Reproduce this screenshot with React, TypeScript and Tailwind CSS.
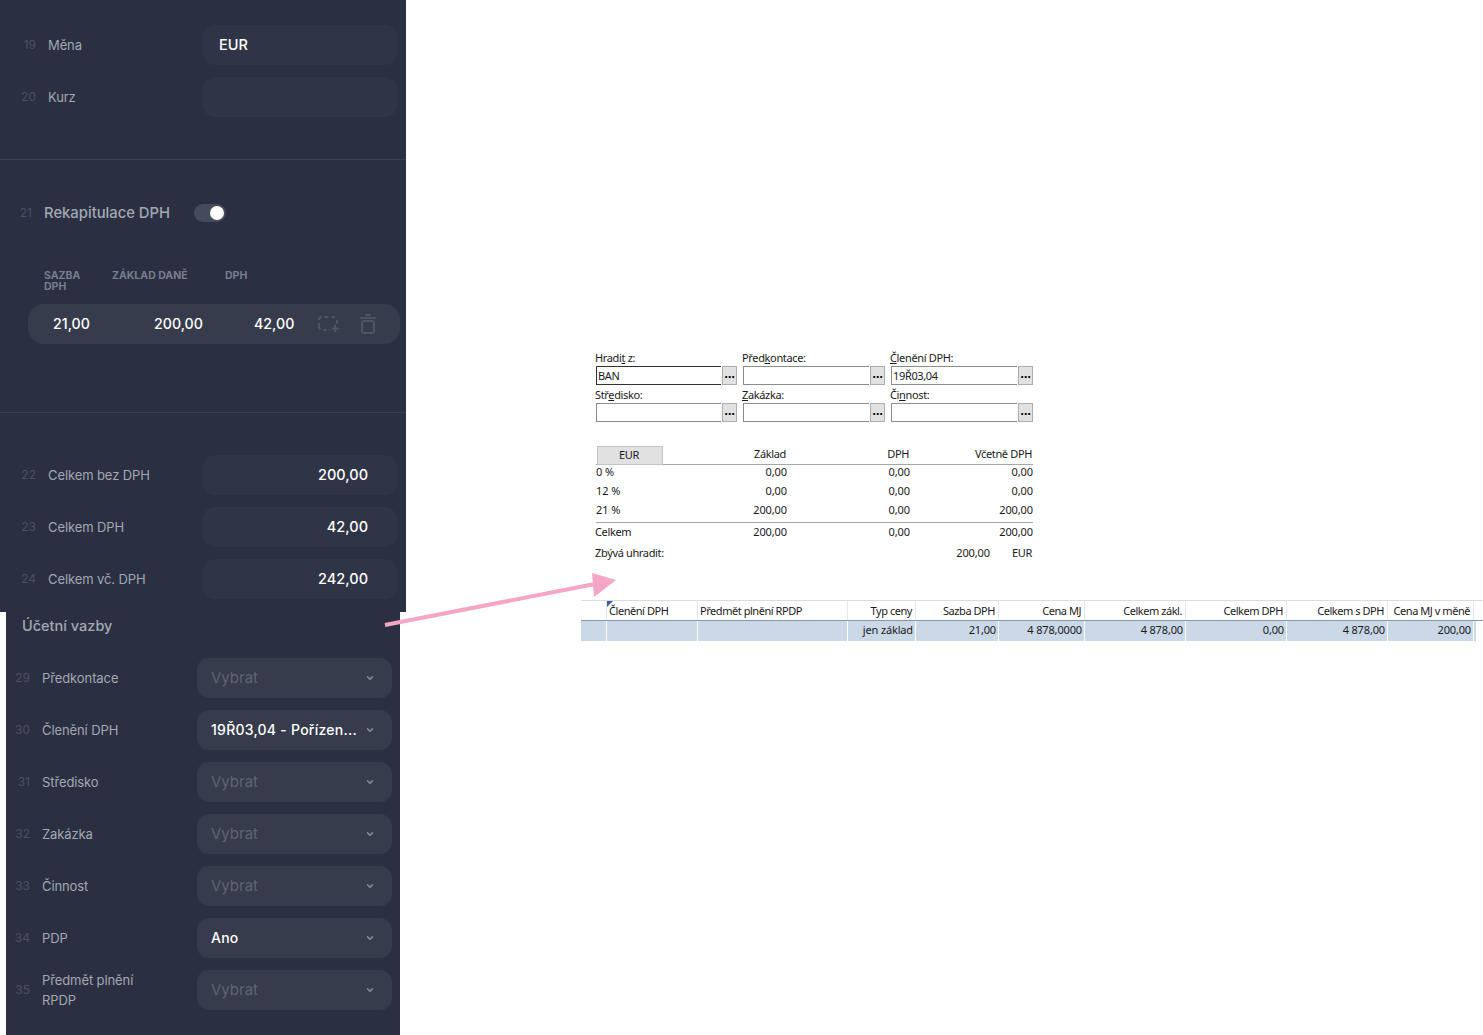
import { ChevronDown } from "lucide-react";
import type { ReactNode } from "react";

function NumLabel({ n, label, w, numW }: { n: number; label: ReactNode; w: string; numW: string }) {
  return (
    <div className={`flex items-center ${w}`}>
      <span className={`${numW} shrink-0 text-right text-[12px] text-[#4a5060]`}>{n}</span>
      <span className="ml-[12px] text-[13px] leading-[20px] tracking-[-0.1px] text-[#a3a8b3]">{label}</span>
    </div>
  );
}

function ValueRow({ n, label, value, right }: { n: number; label: string; value?: string; right?: boolean }) {
  return (
    <div className="flex h-10 items-center">
      <NumLabel n={n} label={label} w="w-[203px]" numW="w-[36px]" />
      <div className={`flex h-10 w-[194px] items-center rounded-xl bg-[#2f3546] text-[14.5px] font-medium text-white ${right ? "justify-end pr-[29px]" : "pl-4"}`}>
        {value}
      </div>
    </div>
  );
}

function SelectRow({ n, label, value }: { n: number; label: ReactNode; value?: string }) {
  return (
    <div className="flex h-10 items-center">
      <NumLabel n={n} label={label} w="w-[191px]" numW="w-[24px]" />
      <div className="flex h-10 w-[195px] items-center justify-between rounded-xl bg-[#363c4b] pl-[14px] pr-[17px]">
        <span className={`whitespace-nowrap ${value ? "pb-px text-[14px] font-medium tracking-[0.25px] text-white" : "text-[15px] text-[#5e6472]"}`}>{value ?? "Vybrat"}</span>
        <ChevronDown size={10} strokeWidth={3.5} className="shrink-0 text-[#8b909c]" />
      </div>
    </div>
  );
}

function DarkPanels() {
  return (
    <div className="w-[406px] shrink-0 font-['Inter',sans-serif]">
      <div className="h-[612px] bg-[#2a3041]">
        <div className="flex flex-col gap-3 pt-[25px] pr-[9px]">
          <ValueRow n={19} label="Měna" value="EUR" />
          <ValueRow n={20} label="Kurz" />
        </div>
        <div className="mt-[42px] h-px bg-[#3a4052]" />
        <div className="mt-[44px] flex h-[18px] items-center">
          <span className="w-[32px] text-right text-[12px] text-[#4a5060]">21</span>
          <span className="ml-[12px] w-[150px] text-[14.8px] font-medium text-[#a3a8b3]">Rekapitulace DPH</span>
          <div className="flex h-[18px] w-[32px] items-center justify-end rounded-full bg-[#454b5c] pr-[2px]">
            <div className="h-[14px] w-[14px] rounded-full bg-white" />
          </div>
        </div>
        <div className="mt-[48px] flex pl-[44px] text-[10.5px] font-bold leading-[11px] text-[#787e8e]">
          <div className="w-[68px]">SAZBA<br />DPH</div>
          <div className="w-[113px]">ZÁKLAD DANĚ</div>
          <div>DPH</div>
        </div>
        <div className="mt-[12px] ml-[28px] flex h-10 w-[372px] items-center rounded-2xl bg-[#363c4b] text-[14.2px] font-medium text-white">
          <span className="ml-[25px] w-[101px]">21,00</span>
          <span className="w-[100px]">200,00</span>
          <span className="w-[64px]">42,00</span>
          <svg width="22" height="18" viewBox="0 0 22 18" fill="none" stroke="#4e5464" strokeWidth="2" className="shrink-0">
            <path d="M1 12V5a3 3 0 0 1 3-3h12a3 3 0 0 1 3 3v4" strokeDasharray="4 3" />
            <path d="M1 12a3 3 0 0 0 3 3h8" strokeDasharray="3 3" />
            <path d="M17 10v7M13.5 13.5h7.5" />
          </svg>
          <svg width="16" height="20" viewBox="0 0 16 20" fill="none" stroke="#4e5464" strokeWidth="2" className="ml-[20px] shrink-0">
            <path d="M0 4h16M5 1h6" />
            <rect x="2" y="7" width="12" height="12" rx="2" />
          </svg>
        </div>
        <div className="mt-[68px] h-px bg-[#3a4052]" />
        <div className="mt-[42px] flex flex-col gap-3 pr-[9px]">
          <ValueRow n={22} label="Celkem bez DPH" value="200,00" right />
          <ValueRow n={23} label="Celkem DPH" value="42,00" right />
          <ValueRow n={24} label="Celkem vč. DPH" value="242,00" right />
        </div>
      </div>
      <div className="ml-[6px] h-[423px] w-[394px] bg-[#2a3041]">
        <div className="pl-[16px] pt-[4px] text-[14.5px] font-medium leading-[20px] text-[#a3a8b3]">Účetní vazby</div>
        <div className="mt-[22px] flex flex-col gap-3">
          <SelectRow n={29} label="Předkontace" />
          <SelectRow n={30} label="Členění DPH" value="19Ř03,04 - Pořízen..." />
          <SelectRow n={31} label="Středisko" />
          <SelectRow n={32} label="Zakázka" />
          <SelectRow n={33} label="Činnost" />
          <SelectRow n={34} label="PDP" value="Ano" />
          <SelectRow n={35} label={<>Předmět plnění<br />RPDP</>} />
        </div>
      </div>
    </div>
  );
}

function Field({ label, value, active, w }: { label: ReactNode; value?: string; active?: boolean; w: string }) {
  return (
    <div>
      <div className="-ml-px h-[15px] leading-[13px]">{label}</div>
      <div className="flex items-center">
        <div className={`h-[19px] ${w} border-b border-l border-t pl-[1px] leading-[18px] ${active ? "border-[#333]" : "border-[#8c8c8c]"}`}>{value}</div>
        <div className="ml-px flex h-[19px] w-[15px] items-center justify-center border border-[#adadad] bg-[#e1e1e1] pb-[3px] font-['DejaVu_Sans',sans-serif] text-[10px] font-bold tracking-[-0.3px] text-black">...</div>
      </div>
    </div>
  );
}

const totals = [
  ["0 %", "0,00", "0,00", "0,00"],
  ["12 %", "0,00", "0,00", "0,00"],
  ["21 %", "200,00", "0,00", "200,00"],
];

const columns = [
  { w: "w-[26px]", head: "", val: "" },
  { w: "w-[91px]", head: "Členění DPH", val: "", left: true, mark: true },
  { w: "w-[150px]", head: "Předmět plnění RPDP", val: "", left: true },
  { w: "w-[68px]", head: "Typ ceny", val: "jen základ" },
  { w: "w-[83px]", head: "Sazba DPH", val: "21,00" },
  { w: "w-[86px]", head: "Cena MJ", val: "4 878,0000" },
  { w: "w-[101px]", head: "Celkem zákl.", val: "4 878,00" },
  { w: "w-[101px]", head: "Celkem DPH", val: "0,00" },
  { w: "w-[101px]", head: "Celkem s DPH", val: "4 878,00" },
  { w: "w-[86px]", head: "Cena MJ v měně", val: "200,00" },
  { w: "w-[1px]", head: "", val: "" },
];

function WindowsForm() {
  return (
    <div className="flex-1 pt-[351px] font-['Noto_Sans',sans-serif] text-[11px] tracking-[-0.35px] text-[#1a1a1a]">
      <div className="ml-[190px] w-[437px]">
        <div className="grid grid-cols-[147px_148px_142px] gap-y-[3px]">
          <Field w="w-[125px]" active value="BAN" label={<>Hradi<u>t</u> z:</>} />
          <Field w="w-[126px]" label={<>Před<u>k</u>ontace:</>} />
          <Field w="w-[127px]" value="19Ř03,04" label={<><u>Č</u>lenění DPH:</>} />
          <Field w="w-[125px]" label={<>Stř<u>e</u>disko:</>} />
          <Field w="w-[126px]" label={<><u>Z</u>akázka:</>} />
          <Field w="w-[127px]" label={<>Či<u>n</u>nost:</>} />
        </div>
        <div className="mt-[24px] flex h-[19px] items-end border-b border-[#a8a8a8] pl-[1px] pr-[1px]">
          <div className="-mb-px flex h-[19px] w-[66px] items-center justify-center border border-[#c4c4c4] bg-[#e1e1e1] pr-[2px]">EUR</div>
          <div className="w-[123px] pb-[2px] text-right">Základ</div>
          <div className="w-[123px] pb-[2px] text-right">DPH</div>
          <div className="w-[123px] pb-[2px] text-right">Včetně DPH</div>
        </div>
        <div className="-mt-[3px] tracking-[-0.1px]">
          {totals.map((r) => (
            <div key={r[0]} className="flex h-[19px] items-center leading-[17px]">
              <div className="w-[68px]">{r[0]}</div>
              <div className="w-[123px] text-right">{r[1]}</div>
              <div className="w-[123px] text-right">{r[2]}</div>
              <div className="w-[123px] text-right">{r[3]}</div>
            </div>
          ))}
        </div>
        <div className="mt-[3px] flex h-[19px] items-center border-t border-[#a8a8a8] tracking-[-0.1px]">
          <div className="-ml-px w-[69px] tracking-[-0.35px]">Celkem</div>
          <div className="w-[123px] text-right">200,00</div>
          <div className="w-[123px] text-right">0,00</div>
          <div className="w-[123px] text-right">200,00</div>
        </div>
        <div className="mt-[3px] flex h-[19px] items-center">
          <div className="-ml-px w-[335px]">Zbývá uhradit:</div>
          <div className="w-[60px] shrink-0 text-right tracking-[-0.1px]">200,00</div>
          <div className="ml-[22px] w-[20px] shrink-0 text-right">EUR</div>
        </div>
      </div>
      <div className="ml-[175px] mt-[37px] border-t border-[#dcdcdc]">
        <div className="flex h-[20px] border-b border-[#8497b4] tracking-[-0.45px]">
          {columns.map((c, i) => (
            <div key={i} className={`relative flex h-[19px] shrink-0 items-center pt-px ${c.w} ${i < 10 ? "border-r border-[#e4e9f1]" : ""} ${c.left ? "pl-[2px]" : "justify-end pr-[3px]"}`}>
              {c.mark && <span className="absolute left-0 top-0 h-0 w-0 border-r-[6px] border-t-[6px] border-r-transparent border-t-[#3c5fa0]" />}
              <span className="whitespace-nowrap">{c.head}</span>
            </div>
          ))}
        </div>
        <div className="flex h-[20px] tracking-[-0.15px]">
          {columns.map((c, i) => (
            <div key={i} className={`flex h-[20px] shrink-0 items-center justify-end bg-[#cbd8e8] pb-px pr-[2px] ${c.w} ${i < 10 ? "border-r border-white" : ""}`}>
              <span className="whitespace-nowrap">{c.val}</span>
            </div>
          ))}
        </div>
      </div>
    </div>
  );
}

export default function App() {
  return (
    <div className="relative flex h-[1035px] w-[1483px] overflow-hidden bg-white">
      <DarkPanels />
      <WindowsForm />
      <svg width="240" height="60" viewBox="0 0 240 60" className="absolute left-[380px] top-[570px]">
        <line x1="5" y1="55" x2="215" y2="14" stroke="#f4a6c4" strokeWidth="4" />
        <polygon points="236,10 212,3 214,27" fill="#f4a6c4" />
      </svg>
    </div>
  );
}
